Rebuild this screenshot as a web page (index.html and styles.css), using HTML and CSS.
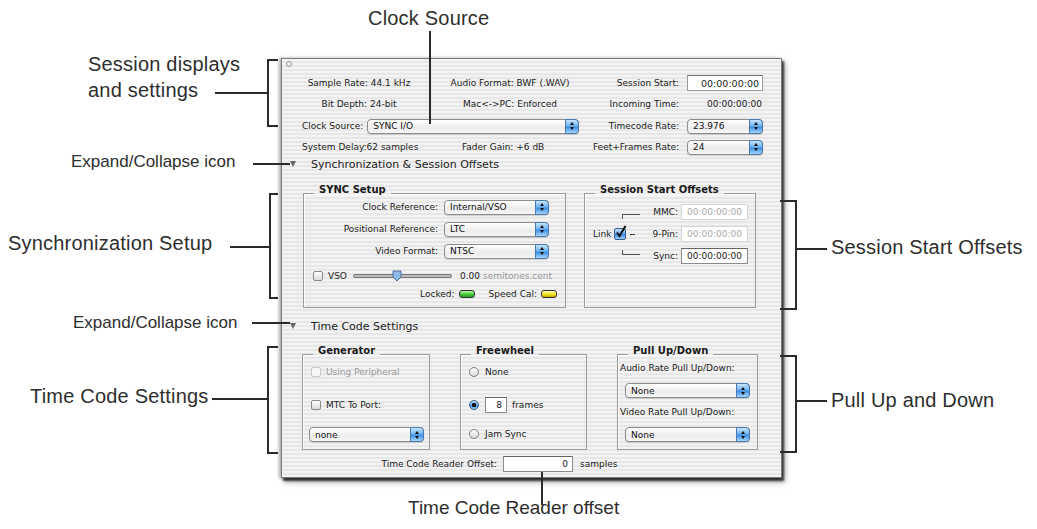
FILE: index.html
```html
<!DOCTYPE html>
<html lang="en">
<head>
  <meta charset="UTF-8">
  <title>Session Setup</title>
  <link rel="stylesheet" href="styles.css">
</head>
<body>
  <div class="figure">
    <div class="window">
      <div class="titlebar"><span class="close"></span></div>

      <div class="info">
        <span class="center">Sample Rate: 44.1 kHz</span>
        <span class="center">Audio Format: BWF (.WAV)</span>
        <span class="label"><span>Session Start:</span></span>
        <span class="field">00:00:00:00</span>

        <span class="center">Bit Depth: 24-bit</span>
        <span class="center">Mac&lt;-&gt;PC: Enforced</span>
        <span class="label"><span>Incoming Time:</span></span>
        <span class="value">00:00:00:00</span>

        <span class="clock-source">Clock Source:
          <span class="popup clock">SYNC I/O<span class="cap"></span></span>
        </span>
        <span class="label"><span>Timecode Rate:</span></span>
        <span class="popup rate">23.976<span class="cap"></span></span>

        <span class="nowrap">System Delay:62 samples</span>
        <span class="fader">Fader Gain: +6 dB</span>
        <span class="label"><span>Feet+Frames Rate:</span></span>
        <span class="popup rate">24<span class="cap"></span></span>
      </div>

      <div class="disclosure"><span class="tri"></span>Synchronization &amp; Session Offsets</div>

      <div class="groups sync">
        <fieldset class="group sync-setup">
          <legend>SYNC Setup</legend>
          <div class="ref-grid">
            <span class="label"><span>Clock Reference:</span></span>
            <span class="popup ref">Internal/VSO<span class="cap"></span></span>
            <span class="label"><span>Positional Reference:</span></span>
            <span class="popup ref">LTC<span class="cap"></span></span>
            <span class="label"><span>Video Format:</span></span>
            <span class="popup ref">NTSC<span class="cap"></span></span>
          </div>
          <div class="vso-row">
            <span class="check"></span>
            <span>VSO</span>
            <span class="slider"><span class="knob"><svg width="10" height="12" viewBox="0 0 10 12"><path d="M1 1h8v6l-4 4-4-4z" fill="#8fb9e8" stroke="#4b6f99"/></svg></span></span>
            <span class="vso-val">0.00</span>
            <span class="dim">semitones.cent</span>
          </div>
          <div class="status-row">
            <span>Locked:</span><span class="led green"></span>
            <span class="speed">Speed Cal:</span><span class="led yellow"></span>
          </div>
        </fieldset>

        <fieldset class="group offsets">
          <legend>Session Start Offsets</legend>
          <div class="offset-grid">
            <span class="link-top"></span>
            <span class="label"><span>MMC:</span></span>
            <span class="tc-field off">00:00:00:00</span>

            <span class="link">Link
              <span class="check on"><svg width="13" height="14" viewBox="0 0 13 14"><path d="M3 7.5l2.5 3.5 6-10" fill="none" stroke="#111" stroke-width="2"/></svg></span>
              <span class="dash"></span>
            </span>
            <span class="label"><span>9-Pin:</span></span>
            <span class="tc-field off">00:00:00:00</span>

            <span class="link-bottom"></span>
            <span class="label"><span>Sync:</span></span>
            <span class="tc-field">00:00:00:00</span>
          </div>
        </fieldset>
      </div>

      <div class="disclosure second"><span class="tri"></span>Time Code Settings</div>

      <div class="groups timecode">
        <fieldset class="group generator">
          <legend>Generator</legend>
          <div class="opt first dim"><span class="check faded"></span>Using Peripheral</div>
          <div class="opt"><span class="check"></span>MTC To Port:</div>
          <span class="popup port">none<span class="cap"></span></span>
        </fieldset>

        <fieldset class="group freewheel">
          <legend>Freewheel</legend>
          <div class="opt first"><span class="radio"></span>None</div>
          <div class="opt"><span class="radio on"></span><span class="frames">8</span>frames</div>
          <div class="opt last"><span class="radio"></span>Jam Sync</div>
        </fieldset>

        <fieldset class="group pull">
          <legend>Pull Up/Down</legend>
          <div class="pull-label">Audio Rate Pull Up/Down:</div>
          <span class="popup pull-pop">None<span class="cap"></span></span>
          <div class="pull-label">Video Rate Pull Up/Down:</div>
          <span class="popup pull-pop">None<span class="cap"></span></span>
        </fieldset>
      </div>

      <div class="reader">
        <span class="reader-label">Time Code Reader Offset:</span>
        <span class="reader-field">0</span>
        <span>samples</span>
      </div>
    </div>

    <!-- callouts -->
    <div class="note n-clock">Clock Source</div>
    <div class="vline l-clock"></div>

    <div class="note two-line n-session">Session displays<br>and settings</div>
    <div class="hline l-session"></div>
    <div class="bracket left b-session"></div>

    <div class="note small n-expand1">Expand/Collapse icon</div>
    <div class="hline l-expand1"></div>

    <div class="note n-sync">Synchronization Setup</div>
    <div class="hline l-sync"></div>
    <div class="bracket left b-sync"></div>

    <div class="note small n-expand2">Expand/Collapse icon</div>
    <div class="hline l-expand2"></div>

    <div class="note n-tc">Time Code Settings</div>
    <div class="hline l-tc"></div>
    <div class="bracket left b-tc"></div>

    <div class="note n-offsets">Session Start Offsets</div>
    <div class="hline l-offsets"></div>
    <div class="bracket right b-offsets"></div>

    <div class="note n-pull">Pull Up and Down</div>
    <div class="hline l-pull"></div>
    <div class="bracket right b-pull"></div>

    <div class="note reader-note n-reader">Time Code Reader offset</div>
    <div class="vline l-reader"></div>
  </div>
</body>
</html>
```

FILE: styles.css
```css
body {
  margin: 0;
  background: #fff;
  font-family: "Liberation Sans", Arial, sans-serif;
  color: #222;
}

.figure {
  position: relative;
  width: 1037px;
  height: 529px;
  padding: 58px 0 0 281px;
  box-sizing: border-box;
  overflow: hidden;
}

/* the window */
.window {
  width: 501px;
  height: 420px;
  box-sizing: border-box;
  border: 1px solid #7a7a7a;
  background: repeating-linear-gradient(#f3f3f3 0 2px, #e7e7e7 2px 4px);
  box-shadow: 2px 3px 2px rgba(0,0,0,0.7), 3px 4px 6px rgba(0,0,0,0.35), -2px 0 3px rgba(0,0,0,0.3);
  font-family: "DejaVu Sans", sans-serif;
  font-size: 9px;
  color: #1c1c1c;
}
.titlebar {
  height: 10px;
  padding: 2px 0 0 4px;
  box-sizing: border-box;
}
.close {
  display: block;
  width: 4px;
  height: 4px;
  border: 1px solid #999;
  border-radius: 50%;
}

.info {
  display: grid;
  grid-template-columns: 114px 188px 83px 76px;
  grid-template-rows: 21px 21px 24px 18px;
  align-items: center;
  padding: 3px 0 0 20px;
  white-space: nowrap;
}
.center { text-align: center; }
.label {
  display: flex;
  justify-content: flex-end;
  padding-right: 8px;
  white-space: nowrap;
}
.field {
  height: 16px;
  box-sizing: border-box;
  border: 1px solid #9a9a9a;
  border-top-color: #6f6f6f;
  background: #fff;
  text-align: right;
  padding: 2px 3px 0 0;
  font-size: 9.5px;
}
.value { text-align: right; padding-right: 1px; }
.clock-source {
  grid-column: span 2;
  display: flex;
  align-items: center;
  gap: 4px;
}
.fader { padding-left: 46px; }

/* aqua popup */
.popup {
  display: flex;
  align-items: center;
  justify-content: space-between;
  height: 15px;
  box-sizing: border-box;
  padding-left: 5px;
  border: 1px solid #8d8d8d;
  border-radius: 4px;
  background: linear-gradient(#ffffff, #ececec 60%, #f6f6f6);
  box-shadow: 0 1px 1px rgba(0,0,0,0.15);
  color: #111;
  white-space: nowrap;
}
.cap {
  align-self: stretch;
  width: 12px;
  margin: -1px -1px -1px 0;
  border: 1px solid #4a78b0;
  border-radius: 0 4px 4px 0;
  background: linear-gradient(#c9e6fd, #6fb2ef 45%, #3d8fe2 55%, #a9d6fb);
  display: flex;
  flex-direction: column;
  align-items: center;
  justify-content: center;
  gap: 2px;
}
.cap::before,
.cap::after {
  content: "";
  border-left: 2px solid transparent;
  border-right: 2px solid transparent;
}
.cap::before { border-bottom: 3px solid #111; }
.cap::after { border-top: 3px solid #111; }
.popup.clock { width: 212px; }
.popup.rate { width: 76px; }
.popup.ref { width: 105px; }
.popup.port { width: 115px; margin-left: 6px; }
.popup.pull-pop { width: 125px; margin-left: 7px; }

/* disclosure headers */
.disclosure {
  display: flex;
  align-items: center;
  height: 16px;
  padding-left: 8px;
  font-size: 11px;
  color: #222;
}
.tri {
  width: 0;
  height: 0;
  border-left: 3px solid transparent;
  border-right: 3px solid transparent;
  border-top: 6px solid #666;
  margin-right: 15px;
}
.disclosure.second { margin-top: 10px; }

/* group boxes */
.groups {
  display: flex;
  align-items: stretch;
  padding-left: 20px;
}
.groups.sync { margin-top: 13px; padding-left: 21px; gap: 18px; }
.groups.timecode { margin-top: 12px; gap: 30px; }
.group {
  margin: 0;
  padding: 0;
  min-width: 0;
  border: 1px solid #9c9c9c;
  box-shadow: inset 1px 1px 0 rgba(255,255,255,0.8);
}
.group legend {
  margin-left: 10px;
  padding: 0 5px 6px;
  font-size: 10px;
  line-height: 10px;
  font-weight: bold;
  color: #1a1a1a;
}

.sync-setup { width: 263px; box-sizing: border-box; }
.ref-grid {
  display: grid;
  grid-template-columns: 134px 105px;
  grid-auto-rows: 16px;
  row-gap: 6px;
  column-gap: 6px;
  align-items: center;
  margin-top: -2px;
}
.ref-grid .label { padding-right: 0; }
.vso-row {
  display: flex;
  align-items: center;
  height: 20px;
  margin-top: 7px;
  padding-left: 9px;
  white-space: nowrap;
}
.vso-row .check { margin-right: 5px; }
.slider {
  position: relative;
  width: 97px;
  height: 2px;
  margin: 0 8px 0 6px;
  border: 1px solid #777;
  border-radius: 2px;
  background: #bdbdbd;
}
.knob {
  position: absolute;
  left: 38px;
  top: -5px;
  line-height: 0;
}
.vso-val { margin-right: 3px; }
.dim { color: #9a9a9a; }
.status-row {
  display: flex;
  align-items: center;
  justify-content: flex-end;
  height: 16px;
  padding: 0 8px 5px 0;
}
.led {
  width: 16px;
  height: 8px;
  box-sizing: border-box;
  margin-left: 4px;
  border: 1px solid #333;
  border-radius: 3px;
}
.led.green { background: linear-gradient(#b6f7a8, #3fc531 60%, #2a9b22); }
.led.yellow { background: linear-gradient(#fffbb0, #efe01c 60%, #bfa800); }
.speed { margin-left: 14px; }

.offsets { width: 172px; box-sizing: border-box; }
.offset-grid {
  display: grid;
  grid-template-columns: 55px 41px 67px;
  grid-auto-rows: 16px;
  row-gap: 6px;
  align-items: center;
  padding-top: 3px;
}
.offset-grid .label { padding-right: 3px; }
.link-top,
.link-bottom {
  width: 17px;
  height: 4px;
  margin-left: 37px;
  border-left: 1px solid #555;
}
.link-top { border-top: 1px solid #555; margin-top: 8px; }
.link-bottom { border-bottom: 1px solid #555; margin-bottom: 8px; }
.link {
  display: flex;
  align-items: center;
  padding-left: 8px;
}
.link .check { margin-left: 3px; }
.dash {
  width: 5px;
  margin-left: 4px;
  border-top: 1px solid #444;
}
.tc-field {
  height: 16px;
  box-sizing: border-box;
  border: 1px solid #8a8a8a;
  border-top-color: #666;
  background: #fff;
  text-align: center;
  padding-top: 2px;
}
.tc-field.off { border-color: #d6d6d6; color: #a8a8a8; }

/* checkboxes and radios */
.check {
  display: inline-block;
  position: relative;
  width: 10px;
  height: 10px;
  box-sizing: border-box;
  border: 1px solid #8a8a8a;
  border-radius: 2px;
  background: linear-gradient(#ffffff, #dcdcdc);
}
.check.faded { border-color: #c8c8c8; background: #f6f6f6; }
.check.on {
  width: 12px;
  height: 12px;
  border-color: #3a5f8f;
  background: linear-gradient(#c2e1fc, #5ea5ec 50%, #3a8ae0 55%, #9ad0fa);
}
.check.on svg {
  position: absolute;
  left: -1px;
  top: -4px;
}
.radio {
  display: inline-block;
  width: 10px;
  height: 10px;
  box-sizing: border-box;
  border: 1px solid #7f7f7f;
  border-radius: 50%;
  background: linear-gradient(#ffffff, #dadada);
}
.radio.on {
  border-color: #3a5f8f;
  background: radial-gradient(circle, #111 0 2px, transparent 2.5px), linear-gradient(#c2e1fc, #5ea5ec 50%, #3a8ae0 55%, #9ad0fa);
}

.generator { width: 128px; box-sizing: border-box; padding-bottom: 6px; }
.freewheel { width: 127px; box-sizing: border-box; padding-bottom: 6px; }
.pull { width: 141px; box-sizing: border-box; padding-bottom: 7px; }
.opt {
  display: flex;
  align-items: center;
  gap: 5px;
  height: 16px;
  padding-left: 8px;
  margin-top: 17px;
  white-space: nowrap;
}
.freewheel .opt { gap: 6px; }
.opt.first { margin-top: 2px; }
.opt.last { margin-top: 13px; }
.generator .popup { margin-top: 14px; }
.frames {
  width: 22px;
  height: 16px;
  box-sizing: border-box;
  border: 1px solid #8a8a8a;
  border-top-color: #666;
  background: #fff;
  text-align: right;
  padding: 2px 4px 0 0;
  margin-right: -1px;
}
.pull-label {
  height: 13px;
  line-height: 13px;
  padding-left: 2px;
  white-space: nowrap;
}
.pull .popup { margin-top: 8px; margin-bottom: 8px; }
.pull .popup:last-child { margin-bottom: 0; }

.reader {
  display: flex;
  align-items: center;
  height: 16px;
  margin-top: 6px;
}
.reader-label {
  width: 215px;
  text-align: right;
  margin-right: 6px;
}
.reader-field {
  width: 70px;
  height: 16px;
  box-sizing: border-box;
  border: 1px solid #8a8a8a;
  border-top-color: #666;
  background: #fff;
  text-align: right;
  padding: 2px 4px 0 0;
  margin-right: 7px;
}
.nowrap { white-space: nowrap; }

/* callouts around the window */
.note {
  position: absolute;
  font-size: 20px;
  line-height: 20px;
  letter-spacing: 0.2px;
  color: #2e2e2e;
  white-space: nowrap;
}
.note.small { font-size: 17px; line-height: 17px; letter-spacing: 0; }
.note.two-line { line-height: 26px; }
.hline { position: absolute; height: 0; border-top: 2px solid #2b2b2b; }
.vline { position: absolute; width: 0; border-left: 2px solid #2b2b2b; }
.bracket { position: absolute; box-sizing: border-box; border: 2px solid #2b2b2b; }
.bracket.left { border-right: none; }
.bracket.right { border-left: none; }

.n-clock { left: 368px; top: 8px; }
.l-clock { left: 429px; top: 31px; height: 93px; }
.n-session { left: 88px; top: 51px; }
.l-session { left: 215px; top: 92px; width: 52px; }
.b-session { left: 267px; top: 59px; width: 11px; height: 68px; }
.n-expand1 { left: 71px; top: 153px; }
.l-expand1 { left: 253px; top: 163px; width: 37px; }
.n-sync { left: 8px; top: 233px; }
.l-sync { left: 230px; top: 246px; width: 39px; }
.b-sync { left: 269px; top: 193px; width: 9px; height: 106px; }
.n-expand2 { left: 73px; top: 314px; }
.l-expand2 { left: 252px; top: 322px; width: 38px; }
.n-tc { left: 30px; top: 386px; }
.l-tc { left: 212px; top: 398px; width: 55px; }
.b-tc { left: 267px; top: 346px; width: 11px; height: 108px; }
.n-offsets { left: 831px; top: 237px; }
.l-offsets { left: 796px; top: 248px; width: 31px; }
.b-offsets { left: 780px; top: 200px; width: 17px; height: 110px; }
.n-pull { left: 831px; top: 390px; }
.l-pull { left: 796px; top: 400px; width: 31px; }
.b-pull { left: 780px; top: 355px; width: 17px; height: 98px; }
.reader-note { font-size: 19px; letter-spacing: 0; }
.n-reader { left: 408px; top: 498px; }
.l-reader { left: 541px; top: 472px; height: 33px; }
```
